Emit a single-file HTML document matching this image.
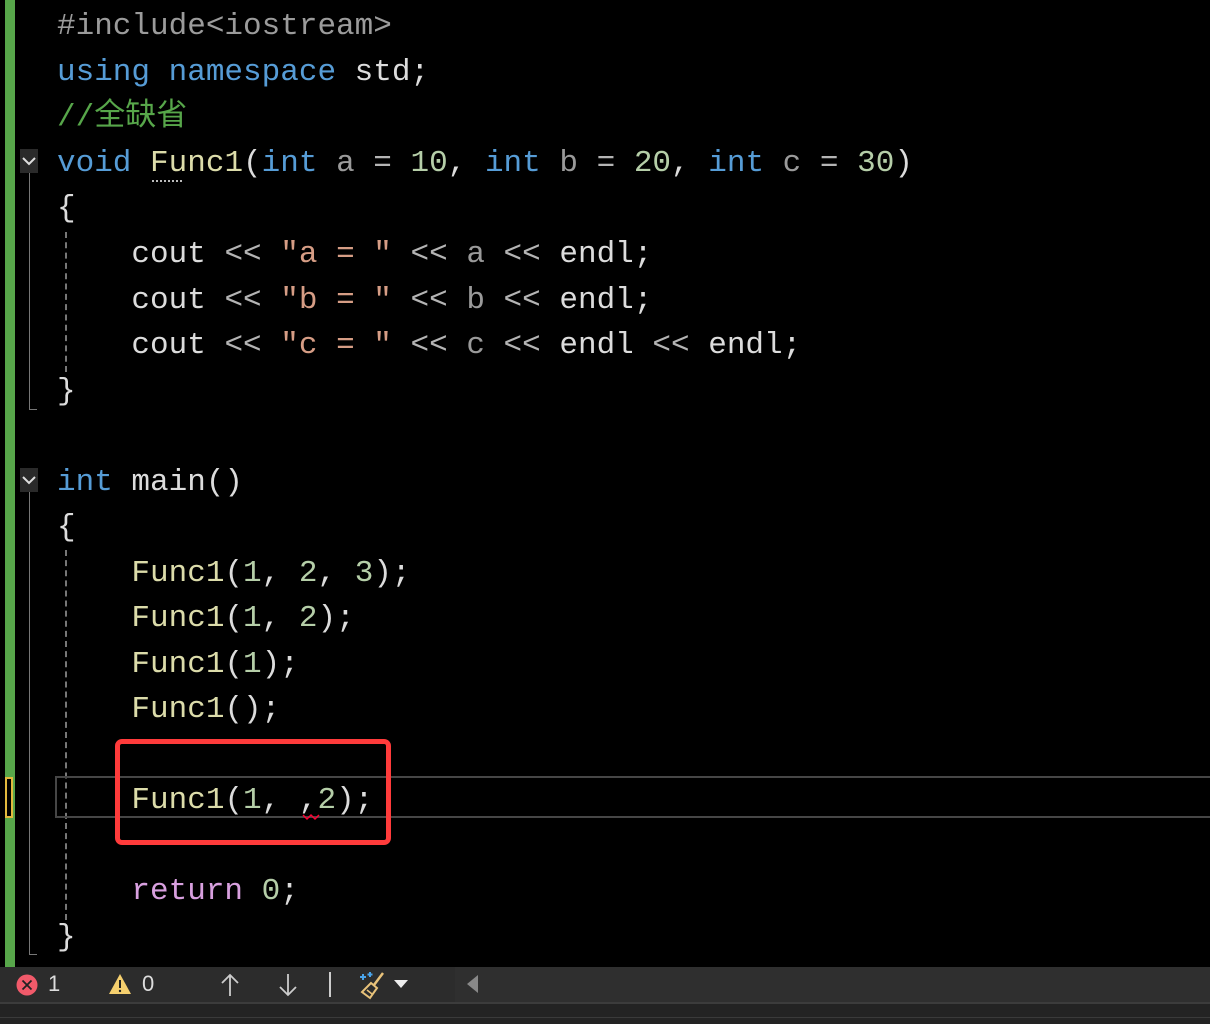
<!DOCTYPE html>
<html><head><meta charset="utf-8"><style>
body{margin:0;width:1210px;height:1024px;background:#000;overflow:hidden;position:relative;font-family:"Liberation Mono","Noto Sans CJK SC",monospace;}
.l{position:absolute;left:57px;font-size:31px;line-height:46px;height:46px;white-space:pre;color:#dcdcdc;margin-top:3px}
.k{color:#569cd6}.f{color:#dcdcaa}.p{color:#9a9a9a}.n{color:#b5cea8}.s{color:#d69d85}.o{color:#b4b4b4}.c{color:#57a64a}.pp{color:#9b9b9b}.r{color:#d8a0df}
.abs{position:absolute}
</style></head><body>
<div class="abs" style="left:5px;top:0;width:10px;height:967px;background:#57a64a"></div>
<div class="abs" style="left:5px;top:777px;width:8px;height:41px;border:2px solid #e2b93d;box-sizing:border-box;background:#000"></div>
<div class="abs" style="left:29px;top:172px;width:1px;height:238px;background:#777"></div>
<div class="abs" style="left:29px;top:409px;width:8px;height:1px;background:#777"></div>
<div class="abs" style="left:29px;top:492px;width:1px;height:463px;background:#777"></div>
<div class="abs" style="left:29px;top:954px;width:8px;height:1px;background:#777"></div>
<svg class="abs" style="left:20px;top:149px" width="18" height="24"><rect width="18" height="24" fill="#2a2a2a"/><path d="M3 9l6 6 6-6" stroke="#ddd" stroke-width="2" fill="none"/></svg>
<svg class="abs" style="left:20px;top:468px" width="18" height="24"><rect width="18" height="24" fill="#2a2a2a"/><path d="M3 9l6 6 6-6" stroke="#ddd" stroke-width="2" fill="none"/></svg>
<div class="abs" style="left:65px;top:232px;width:0;height:140px;border-left:2px dashed #777"></div>
<div class="abs" style="left:65px;top:550px;width:0;height:370px;border-left:2px dashed #777"></div>
<div class="abs" style="left:55px;top:776px;width:1160px;height:42px;border:2px solid #464646;box-sizing:border-box"></div>

<div class="l" style="top:1px"><span class="pp">#include&lt;iostream&gt;</span></div>
<div class="l" style="top:47px"><span class="k">using namespace</span> std;</div>
<div class="l" style="top:92px"><span class="c">//全缺省</span></div>
<div class="l" style="top:138px"><span class="k">void</span> <span class="f">Func1</span>(<span class="k">int</span> <span class="p">a</span> <span class="o">=</span> <span class="n">10</span>, <span class="k">int</span> <span class="p">b</span> <span class="o">=</span> <span class="n">20</span>, <span class="k">int</span> <span class="p">c</span> <span class="o">=</span> <span class="n">30</span>)</div>
<div class="abs" style="left:152px;top:180px;width:30px;border-top:2px dotted #bbb"></div>
<div class="l" style="top:183px">{</div>
<div class="l" style="top:229px">    cout <span class="o">&lt;&lt;</span> <span class="s">"a = "</span> <span class="o">&lt;&lt;</span> <span class="p">a</span> <span class="o">&lt;&lt;</span> endl;</div>
<div class="l" style="top:275px">    cout <span class="o">&lt;&lt;</span> <span class="s">"b = "</span> <span class="o">&lt;&lt;</span> <span class="p">b</span> <span class="o">&lt;&lt;</span> endl;</div>
<div class="l" style="top:320px">    cout <span class="o">&lt;&lt;</span> <span class="s">"c = "</span> <span class="o">&lt;&lt;</span> <span class="p">c</span> <span class="o">&lt;&lt;</span> endl <span class="o">&lt;&lt;</span> endl;</div>
<div class="l" style="top:366px">}</div>
<div class="l" style="top:457px"><span class="k">int</span> main()</div>
<div class="l" style="top:502px">{</div>
<div class="l" style="top:548px">    <span class="f">Func1</span>(<span class="n">1</span>, <span class="n">2</span>, <span class="n">3</span>);</div>
<div class="l" style="top:593px">    <span class="f">Func1</span>(<span class="n">1</span>, <span class="n">2</span>);</div>
<div class="l" style="top:639px">    <span class="f">Func1</span>(<span class="n">1</span>);</div>
<div class="l" style="top:684px">    <span class="f">Func1</span>();</div>
<div class="l" style="top:775px">    <span class="f">Func1</span>(<span class="n">1</span>, ,<span class="n">2</span>);</div>
<svg class="abs" style="left:302px;top:813px" width="18" height="8"><path d="M1 2l4 4 4-4 4 4 4-4" stroke="#f03" stroke-width="1.5" fill="none"/></svg>
<div class="l" style="top:866px">    <span class="r">return</span> <span class="n">0</span>;</div>
<div class="l" style="top:912px">}</div>

<div class="abs" style="left:115px;top:739px;width:276px;height:106px;border:5px solid #ff3b3b;border-radius:7px;box-sizing:border-box"></div>

<div class="abs" style="left:0;top:967px;width:1210px;height:35px;background:#2c2c2c"></div>
<div class="abs" style="left:455px;top:967px;width:755px;height:35px;background:#2f2f2f"></div>
<div class="abs" style="left:0;top:1002px;width:1210px;height:2px;background:#3c3c3c"></div>
<div class="abs" style="left:0;top:1004px;width:1210px;height:20px;background:#232323"></div>
<div class="abs" style="left:0;top:1017px;width:1210px;height:1px;background:#3a3a3a"></div>
<svg class="abs" style="left:16px;top:974px" width="22" height="22"><circle cx="11" cy="11" r="10.5" fill="#f15a6a"/><path d="M6.5 6.5l9 9M15.5 6.5l-9 9" stroke="#222" stroke-width="1.8"/></svg>
<div class="abs" style="left:48px;top:971px;font:22px 'Liberation Sans',sans-serif;color:#ddd">1</div>
<svg class="abs" style="left:108px;top:973px" width="24" height="22"><path d="M12 1L23 21H1z" fill="#f5cf6e"/><path d="M12 7v8" stroke="#222" stroke-width="2"/><circle cx="12" cy="18" r="1.2" fill="#222"/></svg>
<div class="abs" style="left:142px;top:971px;font:22px 'Liberation Sans',sans-serif;color:#ddd">0</div>
<svg class="abs" style="left:219px;top:973px" width="22" height="24"><path d="M11 23V2M3 10l8-8 8 8" stroke="#ccc" stroke-width="1.8" fill="none"/></svg>
<svg class="abs" style="left:277px;top:973px" width="22" height="24"><path d="M11 1v21M3 14l8 8 8-8" stroke="#ccc" stroke-width="1.8" fill="none"/></svg>
<div class="abs" style="left:329px;top:972px;width:2px;height:25px;background:#ccc"></div>
<svg class="abs" style="left:358px;top:970px" width="30" height="30"><path d="M5 4v6M2 7h6M12 2v5M9.5 4.5h5" stroke="#4aa3e8" stroke-width="2"/><path d="M25 3L16 15" stroke="#e8c27a" stroke-width="2.5"/><path d="M13 13l6 5-7 10-8-6z" fill="none" stroke="#e8c27a" stroke-width="2"/><path d="M9 20l5 4" stroke="#e8c27a" stroke-width="1.5"/></svg>
<svg class="abs" style="left:394px;top:980px" width="14" height="9"><path d="M0 0h14L7 8z" fill="#eee"/></svg>
<svg class="abs" style="left:466px;top:975px" width="14" height="18"><path d="M12 0v18L1 9z" fill="#888"/></svg>
</body></html>
